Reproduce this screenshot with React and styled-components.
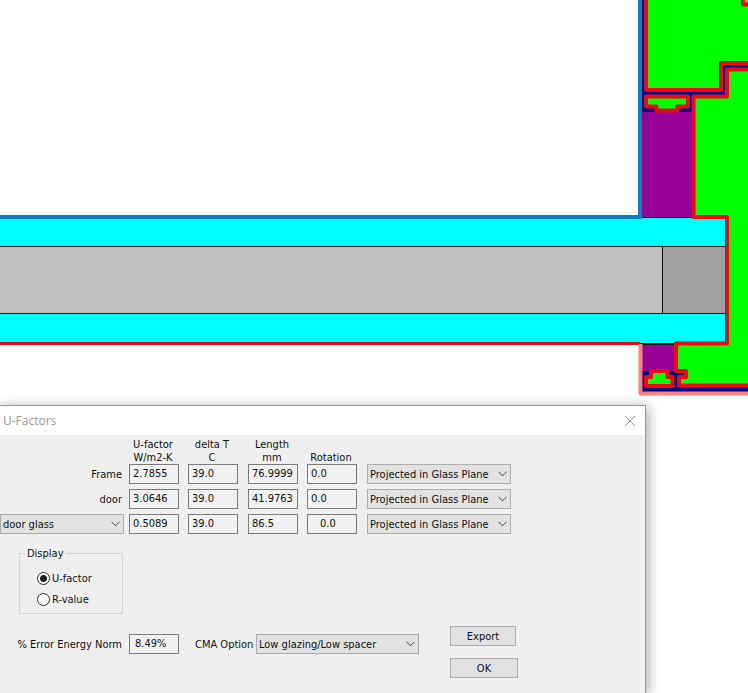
import React, { useState } from "react";
import styled, { createGlobalStyle } from "styled-components";

const Global = createGlobalStyle`
  * { box-sizing: border-box; }
  body {
    margin: 0;
    background: #fff;
    color: #111;
    font-family: "DejaVu Sans Condensed", "Noto Sans", sans-serif;
    font-size: 11px;
    line-height: 13px;
  }
  input, select, button { font: inherit; color: inherit; margin: 0; }
`;

const Page = styled.main`
  display: flex;
  flex-direction: column;
  min-height: 100vh;
  overflow: hidden;
`;

const Drawing = styled.svg`
  display: block;
  width: 100%;
  height: auto;
  flex: none;
`;

const Dialog = styled.section`
  flex: 1;
  display: flex;
  flex-direction: column;
  margin-right: 102px;
  min-width: 540px;
  border: solid #999;
  border-width: 1px 1px 0 0;
  background: #efefef;
  box-shadow: 2px 2px 12px rgba(0, 0, 0, 0.35);
`;

const TitleBar = styled.header`
  display: flex;
  align-items: center;
  justify-content: space-between;
  height: 29px;
  padding: 0 9px 0 3px;
  background: #fff;
`;

const Title = styled.h1`
  margin: 0;
  font: 400 12px/16px "Open Sans", "Noto Sans", sans-serif;
  color: #999;
`;

const CloseButton = styled.button`
  display: flex;
  padding: 0;
  border: 0;
  background: none;
  color: #999;
`;

const Body = styled.form`
  padding: 3px 0 14px;
`;

const Table = styled.div`
  display: grid;
  grid-template-columns: 129px 59px 60px 59px 60px 144px;
  row-gap: 5px;
  align-items: center;
`;

const HeadCell = styled.div`
  width: 48px;
  height: 26px;
  margin-bottom: -5px;
  display: flex;
  flex-direction: column;
  align-items: center;
  justify-content: flex-end;
  white-space: nowrap;
`;

const RowLabel = styled.label`
  width: ${(p) => p.$width || "auto"};
  padding-right: 7px;
  text-align: right;
  white-space: nowrap;
`;

const Field = styled.input`
  width: 50px;
  height: 20px;
  padding: 0 0 1px ${(p) => p.$indent || "3px"};
  border: 1px solid #7c7c7c;
  border-radius: 0;
  background: #f1f1f1;
  outline: none;
`;

const SelectWrap = styled.div`
  position: relative;
  width: ${(p) => p.$width};
`;

const SelectBox = styled.select`
  display: block;
  appearance: none;
  width: 100%;
  height: 20px;
  padding: 0 20px 0 2px;
  border: 1px solid #adadad;
  border-radius: 0;
  background: #e1e1e1;
`;

const Arrow = styled.svg`
  position: absolute;
  right: 4px;
  top: 7px;
  pointer-events: none;
`;

const Group = styled.fieldset`
  width: 104px;
  height: 67px;
  margin: 13px 0 0 19px;
  padding: 12px 0 0 17px;
  border: 1px solid #d5d5d5;
  display: flex;
  flex-direction: column;
  gap: 8px;
`;

const Legend = styled.legend`
  margin-left: -12px;
  padding: 0 3px 0 2px;
`;

const RadioLabel = styled.label`
  display: flex;
  align-items: center;
  gap: 2px;
`;

const Radio = styled.input`
  appearance: none;
  width: 13px;
  height: 13px;
  border: 1px solid #333;
  border-radius: 50%;
  background: #fff;
  &:checked {
    background: radial-gradient(circle, #222 3px, #fff 4px);
  }
`;

const Footer = styled.div`
  display: flex;
  align-items: flex-start;
  margin-top: 12px;
`;

const Options = styled.div`
  display: flex;
  align-items: center;
  padding-top: 8px;
`;

const OptionLabel = styled.label`
  width: 61px;
  margin-left: 16px;
  white-space: nowrap;
`;

const Buttons = styled.div`
  display: flex;
  flex-direction: column;
  gap: 12px;
  margin-left: 31px;
`;

const PushButton = styled.button`
  width: ${(p) => p.$width};
  height: 20px;
  padding: 0;
  border: 1px solid #adadad;
  background: #e1e1e1;
`;

function Select({ width, id, label, options }) {
  return (
    <SelectWrap $width={width}>
      <SelectBox id={id} aria-label={label}>
        {options.map((o) => (
          <option key={o}>{o}</option>
        ))}
      </SelectBox>
      <Arrow width="9" height="6" viewBox="0 0 9 6" aria-hidden="true">
        <path d="M.5 .8 4.5 4.8 8.5 .8" fill="none" stroke="#444" />
      </Arrow>
    </SelectWrap>
  );
}

const rows = [
  { name: "Frame", values: ["2.7855", "39.0", "76.9999", "0.0"] },
  { name: "door", values: ["3.0646", "39.0", "41.9763", "0.0"] },
  { name: "door glass", values: ["0.5089", "39.0", "86.5", "0.0"], pick: true },
];
const columns = ["U-factor", "delta T", "Length", "Rotation"];

function CrossSection() {
  return (
    <Drawing viewBox="0 0 748 405" role="img" aria-label="Window cross section">
      <rect x="640" width="108" height="393" fill="#000090" />
      <path d="M646 0V90H721V63H748V0Z" fill="#0f0" />
      <path
        d="M748 69.5H727V96.5H693.5V217H727V343.5H676V371H686V377H679V385.5H748Z"
        fill="#0f0"
      />
      <path d="M642 112H692V217H642Z M642 344H675V371H642Z" fill="#960096" />
      <path d="M0 218H726V343H0Z" fill="#0ff" />
      <path d="M0 247H662V313H0Z" fill="#c0c0c0" />
      <path d="M662 247H725V313H662Z" fill="#a0a0a0" />
      <path
        d="M0 246.5H726M0 313.5H726M662.5 246V314M640 217.5H694M642 344.5H676"
        fill="none"
        stroke="#111"
      />
      <g fill="none" stroke="#f00810" strokeWidth="4" strokeLinejoin="round">
        <path d="M646 0V90H721V63H748" />
        <path d="M748 69.5H727V96.5H693.5V217H727V343.5H676V371H686V377H679V385.5H748" />
        <path d="M743 0V4.5H748" />
        <path
          d="M646 96.5H688V106.5H677.5V110.5H656.5V106.5H646Z M646 386V377H651V371H667.5V377H672.5V386Z"
          fill="#0f0"
        />
        <path d="M0 343.5H640" strokeWidth="3" />
      </g>
      <path d="M727 219V342" stroke="#dc1212" strokeWidth="4" />
      <path d="M0 217H640V0" fill="none" stroke="#0a80c0" strokeWidth="4" />
      <path
        d="M640.5 344V393.5H748"
        fill="none"
        stroke="#ff8080"
        strokeWidth="4"
        strokeLinejoin="round"
      />
    </Drawing>
  );
}

export default function App() {
  const [display, setDisplay] = useState("U-factor");
  return (
    <Page>
      <Global />
      <CrossSection />
      <Dialog aria-label="U-Factors">
        <TitleBar>
          <Title>U-Factors</Title>
          <CloseButton aria-label="Close">
            <svg width="12" height="12" viewBox="0 0 12 12">
              <path d="M1 1 11 11M11 1 1 11" stroke="currentColor" />
            </svg>
          </CloseButton>
        </TitleBar>
        <Body onSubmit={(e) => e.preventDefault()}>
          <Table>
            <div />
            <HeadCell><span>U-factor</span><span>W/m2-K</span></HeadCell>
            <HeadCell><span>delta T</span><span>C</span></HeadCell>
            <HeadCell><span>Length</span><span>mm</span></HeadCell>
            <HeadCell><span>Rotation</span></HeadCell>
            <div />
            {rows.map((row, r) => (
              <React.Fragment key={row.name}>
                {row.pick ? (
                  <Select width="124px" label="Component" options={[row.name]} />
                ) : (
                  <RowLabel htmlFor={`value-${r}-0`}>{row.name}</RowLabel>
                )}
                {row.values.map((v, c) => (
                  <Field
                    key={columns[c]}
                    id={`value-${r}-${c}`}
                    aria-label={`${row.name} ${columns[c]}`}
                    $indent={row.pick && c === 3 ? "12px" : "3px"}
                    defaultValue={v}
                    readOnly
                  />
                ))}
                <Select
                  width="144px"
                  label={`${row.name} projection`}
                  options={["Projected in Glass Plane"]}
                />
              </React.Fragment>
            ))}
          </Table>
          <Group>
            <Legend>Display</Legend>
            {["U-factor", "R-value"].map((name) => (
              <RadioLabel key={name}>
                <Radio
                  type="radio"
                  name="display"
                  checked={display === name}
                  onChange={() => setDisplay(name)}
                />
                {name}
              </RadioLabel>
            ))}
          </Group>
          <Footer>
            <Options>
              <RowLabel $width="129px" htmlFor="norm">% Error Energy Norm</RowLabel>
              <Field id="norm" $indent="5px" defaultValue="8.49%" readOnly />
              <OptionLabel htmlFor="cma">CMA Option</OptionLabel>
              <Select width="163px" id="cma" options={["Low glazing/Low spacer"]} />
            </Options>
            <Buttons>
              <PushButton type="button" $width="66px">Export</PushButton>
              <PushButton type="submit" $width="68px">OK</PushButton>
            </Buttons>
          </Footer>
        </Body>
      </Dialog>
    </Page>
  );
}
